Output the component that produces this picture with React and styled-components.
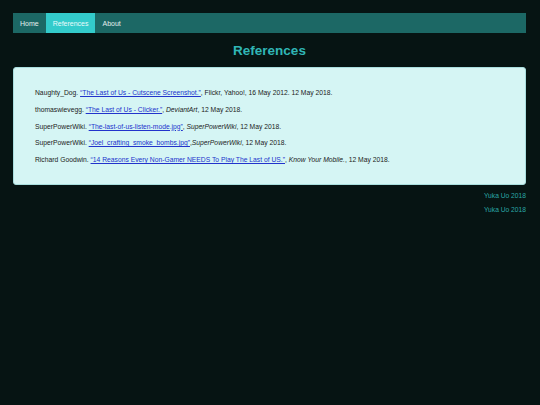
import React from "react";
import styled, { createGlobalStyle } from "styled-components";

const Global = createGlobalStyle`
  html, body { margin: 0; padding: 0; background: #061413; }
  body { font-family: "Liberation Sans", Arial, sans-serif; }
`;

const Page = styled.div`
  padding: 13px 14px 0 13px;
  min-height: 405px;
  box-sizing: border-box;
`;

const Nav = styled.nav`
  display: flex;
  height: 20px;
  background: #1c6865;
`;

const NavItem = styled.a`
  display: flex;
  align-items: center;
  padding: 0 7px;
  font-size: 7px;
  color: ${(p) => (p.$active ? "#e8fbfb" : "#e3efee")};
  background: ${(p) => (p.$active ? "#33cbcb" : "transparent")};
  text-decoration: none;
`;

const Title = styled.h1`
  margin: 10px 0 0;
  height: 16px;
  line-height: 16px;
  text-align: center;
  font-size: 13.5px;
  font-weight: bold;
  color: #30b6b6;
`;

const Card = styled.div`
  margin-top: 8px;
  background: #d5f5f4;
  border-radius: 3px;
  border: 1px solid #a9dede;
  padding: 21px 21px 19px;
  display: flex;
  flex-direction: column;
  gap: 8.25px;
`;

const Ref = styled.p`
  margin: 0;
  font-size: 6.75px;
  line-height: 8.5px;
  color: #1b1b1b;
`;

const Link = styled.a`
  color: #2233cc;
  text-decoration: underline;
`;

const Footer = styled.div`
  margin-top: 6px;
  display: flex;
  flex-direction: column;
  align-items: flex-end;
  gap: 5px;
`;

const Credit = styled.div`
  font-size: 6.7px;
  line-height: 9px;
  color: #2aa7a6;
`;

const refs = [
  [
    "Naughty_Dog. ",
    "“The Last of Us - Cutscene Screenshot.”",
    ", Flickr, Yahoo!, 16 May 2012. 12 May 2018.",
    null,
    "",
  ],
  ["thomaswievegg. ", "“The Last of Us - Clicker.”", ", ", "DeviantArt", ", 12 May 2018."],
  ["SuperPowerWiki. ", "“The-last-of-us-listen-mode.jpg”", ", ", "SuperPowerWiki", ", 12 May 2018."],
  ["SuperPowerWiki. ", "“Joel_crafting_smoke_bombs.jpg”", ",", "SuperPowerWiki", ", 12 May 2018."],
  [
    "Richard Goodwin. ",
    "“14 Reasons Every Non-Gamer NEEDS To Play The Last of US.”",
    ", ",
    "Know Your Mobile.",
    ", 12 May 2018.",
  ],
];

export default function App() {
  return (
    <>
      <Global />
      <Page>
        <Nav>
          <NavItem href="#">Home</NavItem>
          <NavItem href="#" $active>References</NavItem>
          <NavItem href="#">About</NavItem>
        </Nav>
        <Title>References</Title>
        <Card>
          {refs.map((r, i) => (
            <Ref key={i}>
              {r[0]}
              <Link href="#">{r[1]}</Link>
              {r[2]}
              {r[3] && <i>{r[3]}</i>}
              {r[4]}
            </Ref>
          ))}
        </Card>
        <Footer>
          <Credit>Yuka Uo 2018</Credit>
          <Credit>Yuka Uo 2018</Credit>
        </Footer>
      </Page>
    </>
  );
}
